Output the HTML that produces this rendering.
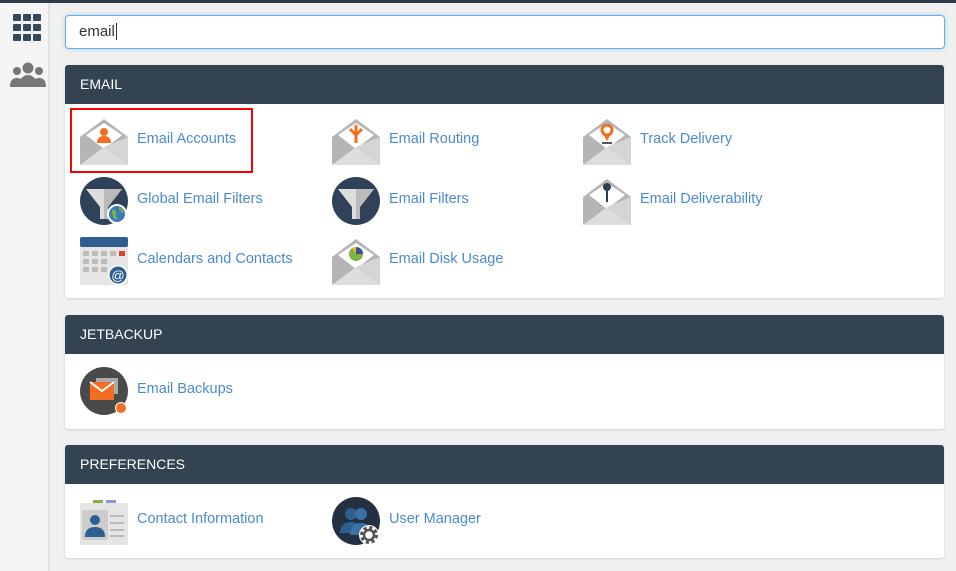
<!DOCTYPE html>
<html><head><style>
body{margin:0;width:956px;height:571px;background:#f0f0f0;font-family:"Liberation Sans",sans-serif;position:relative;overflow:hidden}
.top{position:absolute;left:0;top:0;width:956px;height:3px;background:#2f3b48}
.side{position:absolute;left:0;top:3px;width:48px;height:568px;background:#f5f5f5;border-right:2px solid #e2e2e2}
.search{position:absolute;left:65px;top:15px;border:1px solid #66afe9;border-radius:4px;background:#fff;box-shadow:0 0 4px rgba(102,175,233,.5);font-size:15px;color:#333;line-height:31px;padding-left:13px;box-sizing:border-box;width:880px;height:34px}
.panel{position:absolute;left:65px;width:879px;background:#fff;border-radius:3px;box-shadow:0 1px 2px rgba(0,0,0,.12)}
.hd{height:39px;background:#334352;color:#fff;font-size:14px;line-height:39px;padding-left:15px;border-radius:3px 3px 0 0}
.it{position:absolute;height:48px;display:flex;align-items:center;font-size:14.5px;color:#4a8ad4}
.it span{padding-bottom:4px}
.it svg{width:48px;height:48px;margin-right:9px;flex:none}
</style></head><body>
<div class="top"></div>
<div class="side">
<svg style="position:absolute;left:13px;top:11px" width="29" height="27" viewBox="0 0 29 27"><g fill="#34495e"><rect x="0" y="0" width="8" height="7" rx="1"/><rect x="10" y="0" width="8" height="7" rx="1"/><rect x="20" y="0" width="8" height="7" rx="1"/><rect x="0" y="10" width="8" height="7" rx="1"/><rect x="10" y="10" width="8" height="7" rx="1"/><rect x="20" y="10" width="8" height="7" rx="1"/><rect x="0" y="20" width="8" height="7" rx="1"/><rect x="10" y="20" width="8" height="7" rx="1"/><rect x="20" y="20" width="8" height="7" rx="1"/></g></svg>
<svg style="position:absolute;left:10px;top:59px" width="36" height="26" viewBox="0 0 36 26"><g fill="#777"><circle cx="18" cy="6" r="5.5"/><circle cx="7" cy="9" r="4"/><circle cx="29" cy="9" r="4"/><path d="M9 25c0-8 4-12 9-12s9 4 9 12z"/><path d="M0 25c0-7 3-9 7-9s6 2 6 3c-2 2-3 4-3 6z"/><path d="M36 25c0-7-3-9-7-9s-6 2-6 3c2 2 3 4 3 6z"/></g></svg>
</div>
<div class="search">email<span style="border-left:1px solid #333;margin-left:1px"></span></div>

<svg width="0" height="0" style="position:absolute"><defs>
<g id="env"><path d="M0 20 L24 2 L48 20 V46 a2 2 0 0 1-2 2 H2 a2 2 0 0 1-2-2Z" fill="#b5b5b5"/><path d="M6 18 L24 6 L42 18 L24 32Z" fill="#fff"/><path d="M0 48 L24 30 L48 48Z" fill="#ddd"/><path d="M24 30 L48 20 V48Z" fill="#d5d5d5"/></g>
</defs></svg>

<div class="panel" style="top:65px;height:233px"><div class="hd">EMAIL</div>
<div class="it" style="left:15px;top:52px"><svg viewBox="0 0 48 48"><use href="#env"/><circle cx="24" cy="15" r="4" fill="#f26f21"/><path d="M17 26c0-5 3-7 7-7s7 2 7 7z" fill="#f26f21"/></svg><span>Email Accounts</span></div>
<div class="it" style="left:267px;top:52px"><svg viewBox="0 0 48 48"><use href="#env"/><path d="M24 26V14M24 18l-6-6M24 18l6-6M24 8v6" stroke="#f26f21" stroke-width="3" fill="none"/></svg><span>Email Routing</span></div>
<div class="it" style="left:518px;top:52px"><svg viewBox="0 0 48 48"><use href="#env"/><circle cx="24" cy="13" r="5" fill="none" stroke="#f26f21" stroke-width="3"/><path d="M20 17l4 7 4-7" fill="#f26f21"/><rect x="19" y="25" width="10" height="2" fill="#555"/></svg><span>Track Delivery</span></div>
<div class="it" style="left:15px;top:112px"><svg viewBox="0 0 48 48"><circle cx="24" cy="24" r="24" fill="#30415a"/><path d="M6 12h36L28 30v12h-8V30z" fill="#ddd"/><path d="M24 12h18L28 30v12h-4z" fill="#bbb"/><circle cx="37" cy="37" r="10" fill="#fff"/><circle cx="37" cy="37" r="8" fill="#3a7bbf"/><path d="M32 33c3-1 5 1 4 4s2 3 1 6c-3 0-5-4-5-10zM39 30c3 1 5 4 5 6-2 0-3-2-5-3z" fill="#7cb342"/></svg><span>Global Email Filters</span></div>
<div class="it" style="left:267px;top:112px"><svg viewBox="0 0 48 48"><circle cx="24" cy="24" r="24" fill="#30415a"/><path d="M6 12h36L28 30v12h-8V30z" fill="#ddd"/><path d="M24 12h18L28 30v12h-4z" fill="#bbb"/></svg><span>Email Filters</span></div>
<div class="it" style="left:518px;top:112px"><svg viewBox="0 0 48 48"><use href="#env"/><circle cx="24" cy="10" r="4" fill="#2d3e50"/><rect x="23" y="12" width="2" height="13" fill="#2d3e50"/></svg><span>Email Deliverability</span></div>
<div class="it" style="left:15px;top:172px"><svg viewBox="0 0 48 48"><rect x="0" y="0" width="48" height="48" rx="2" fill="#e5e5e5"/><rect x="0" y="0" width="48" height="10" rx="2" fill="#2f5f8f"/><g fill="#bbb"><rect x="3" y="14" width="6" height="5"/><rect x="12" y="14" width="6" height="5"/><rect x="21" y="14" width="6" height="5"/><rect x="30" y="14" width="6" height="5"/><rect x="3" y="22" width="6" height="5"/><rect x="12" y="22" width="6" height="5"/><rect x="21" y="22" width="6" height="5"/><rect x="3" y="30" width="6" height="5"/><rect x="12" y="30" width="6" height="5"/><rect x="21" y="30" width="6" height="5"/></g><rect x="39" y="14" width="6" height="5" fill="#d9432f"/><circle cx="38" cy="38" r="10" fill="#fff"/><circle cx="38" cy="38" r="8.5" fill="#2f5f8f"/><text x="38" y="43" font-size="13" fill="#fff" text-anchor="middle" font-family="Liberation Sans">@</text></svg><span>Calendars and Contacts</span></div>
<div class="it" style="left:267px;top:172px"><svg viewBox="0 0 48 48"><use href="#env"/><circle cx="24" cy="17" r="7" fill="#7cb342"/><path d="M24 17V10a7 7 0 0 1 7 7z" fill="#3d4f8f"/><path d="M24 17V10a7 7 0 0 0-4 1.3z" fill="#f0b429"/></svg><span>Email Disk Usage</span></div>
</div>
<div style="position:absolute;left:70px;top:108px;width:179px;height:61px;border:2px solid #f00"></div>

<div class="panel" style="top:315px;height:114px"><div class="hd">JETBACKUP</div>
<div class="it" style="left:15px;top:52px"><svg viewBox="0 0 48 48"><circle cx="24" cy="24" r="24" fill="#4a4a4a"/><rect x="16" y="11" width="22" height="16" fill="#aaa"/><rect x="10" y="15" width="24" height="18" fill="#f26f21"/><path d="M10 15l12 9 12-9" fill="none" stroke="#fff" stroke-width="2"/><circle cx="41" cy="41" r="6" fill="#fff"/><circle cx="41" cy="41" r="5" fill="#f26f21"/></svg><span>Email Backups</span></div>
</div>

<div class="panel" style="top:445px;height:113px"><div class="hd">PREFERENCES</div>
<div class="it" style="left:15px;top:52px"><svg viewBox="0 0 48 48"><rect x="13" y="3" width="10" height="4" fill="#7cb342"/><rect x="26" y="3" width="10" height="4" fill="#8a9ac8"/><rect x="0" y="6" width="48" height="42" rx="2" fill="#e5e5e5"/><rect x="2" y="13" width="26" height="30" fill="#ccc"/><circle cx="15" cy="23" r="5" fill="#2f5f8f"/><path d="M5 40c0-8 5-10 10-10s10 2 10 10z" fill="#2f5f8f"/><g fill="#bbb"><rect x="30" y="18" width="14" height="2"/><rect x="30" y="25" width="14" height="2"/><rect x="30" y="32" width="14" height="2"/><rect x="30" y="38" width="14" height="2"/></g></svg><span>Contact Information</span></div>
<div class="it" style="left:267px;top:52px"><svg viewBox="0 0 48 48"><circle cx="24" cy="24" r="24" fill="#223041"/><circle cx="19" cy="17" r="6" fill="#2f5f8f"/><circle cx="29" cy="17" r="6" fill="#3a72a8"/><path d="M8 36c0-8 5-11 11-11s8 3 8 11z" fill="#2f5f8f"/><path d="M18 38c0-9 5-12 11-12s10 3 10 12z" fill="#3a72a8"/><circle cx="37" cy="38" r="10" fill="#fff"/><circle cx="37" cy="38" r="7" fill="none" stroke="#555" stroke-width="4" stroke-dasharray="3 2.5"/><circle cx="37" cy="38" r="5" fill="none" stroke="#555" stroke-width="2.5"/></svg><span>User Manager</span></div>
</div>
</body></html>
